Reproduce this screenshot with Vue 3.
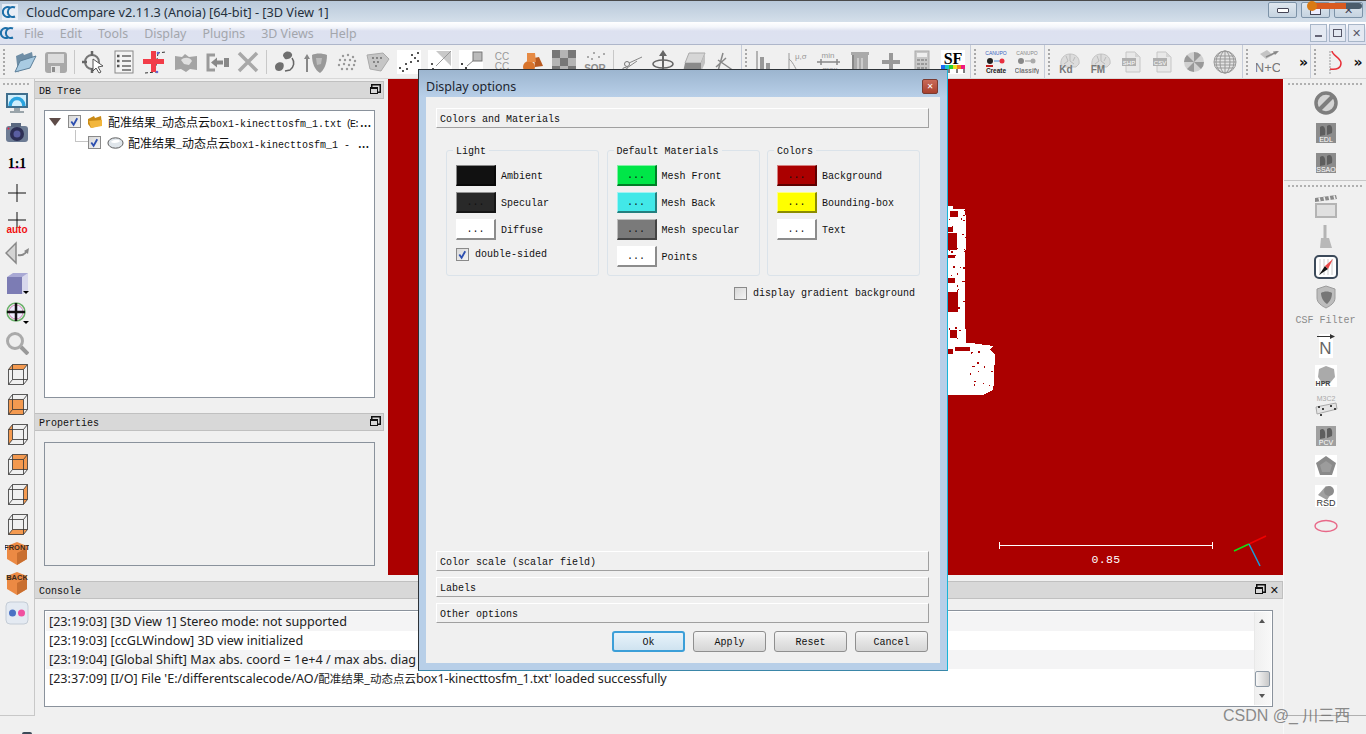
<script setup>
// greyed out toolbar icons, all drawn on a 24x24 box
const cube = (face) =>
  `<path fill="#f49a50" d="${face}"/><path fill="none" stroke="#333" stroke-width=".8" d="M3.500 8.500h15v15h-15zM7.500 3.500h15v15h-15zM3.500 8.500l4-5M18.500 8.500l4-5M18.500 23.500l4-5M3.500 23.500l4-5"/>`
const tagCube = (label) =>
  `<path fill="#ec8a44" d="M12 1l10 4v13l-10 6-10-6V5z"/><path fill="#c96f30" d="M12 12v12l10-6V7z"/><text x="12" y="9" font-family="Liberation Sans" font-weight="700" font-size="7.500" text-anchor="middle" fill="#3a2a20">${label}</text>`
const brain = `<path fill="#dcdcdc" stroke="#c4c4c4" d="M3 15c-1-6 3-11 9-11s10 4 9 10l-3 3H6z"/><path fill="none" stroke="#bbb" d="M8 6l2 5-4 3M12 4v7l4 3M17 7l-2 4"/>`
const greyBox = (label, bg = '#8c8c8c') =>
  `<rect x="2" y="2" width="20" height="20" fill="${bg}"/><path fill="#5e5e5e" d="M6 6c4-3 6 1 5 8l-5 1zM13 5c4-3 6 1 5 7l-5 2z"/><text x="12" y="21" font-family="Liberation Sans" font-size="7" text-anchor="middle" fill="#fff">${label}</text>`
const docIcon = (label) =>
  `<path fill="#e8e8e8" stroke="#c6c6c6" d="M6 2h9l5 5v15H6z"/><path fill="#d4d4d4" d="M15 2v5h5z"/><rect x="2" y="8" width="14" height="8" fill="#b0b0b0"/><text x="9" y="14.500" font-family="Liberation Sans" font-size="6" text-anchor="middle" fill="#fff">${label}</text>`

const icons = {
  folder: `<path fill="#6f8ea6" d="M3 6l7-3 1 2 8-3 1 6-12 5-3 10z"/><path fill="#a9cbe2" stroke="#5c7f99" d="M2 22l5-11 16-5-6 12z"/>`,
  save: `<rect x="1" y="2" width="22" height="21" rx="3" fill="#a9a9a9"/><rect x="4" y="4" width="16" height="9" fill="#dcdcdc"/><rect x="7" y="16" width="9" height="7" fill="#e4e4e4"/><rect x="8" y="17" width="3" height="5" fill="#8c8c8c"/>`,
  pick: `<circle cx="11" cy="12" r="7" fill="none" stroke="#777" stroke-width="2"/><path stroke="#666" stroke-width="2.500" d="M11 1v5M1 12h5M11 18v5"/><path fill="#fff" stroke="#555" d="M12 9l10 7-5 1 3 5-2 1-3-5-3 3z"/>`,
  list: `<rect x="3" y="1" width="18" height="22" fill="#f4f4f4" stroke="#888"/><path stroke="#666" stroke-width="1.500" d="M10 6h9M10 11h9M10 16h9M10 20h9"/><path stroke="#555" stroke-width="2.500" d="M5 6h2.500M5 11h2.500M5 16h2.500"/>`,
  plus: `<path fill="none" stroke="#333" stroke-dasharray="3 2" d="M14 3l9-1M15 3l-3 19M2 23l11-1"/><path fill="#f23c48" d="M8 1h5v8h8v5h-8v8H8v-8H0V9h8z"/><circle cx="15" cy="3" r="1.300" fill="#66c"/><circle cx="14" cy="22" r="1.300" fill="#66c"/>`,
  clouds: `<path fill="#a4a4a4" d="M1 6l7 1 3-3 4 3 8-1v14l-7-1-4 3-5-3-6 1z"/><path fill="#e0e0e0" d="M7 10c3-3 9-3 11 1l-3 4-5-1z"/>`,
  export: `<path fill="none" stroke="#9a9a9a" stroke-width="3" d="M10 5H3v15h7"/><path fill="#888" d="M19 8h5v9h-5zM6 12.500l6-5v3h6v4h-6v3z"/>`,
  close: `<path stroke="#a8a8a8" stroke-width="3.500" d="M3 3l18 18M21 3L3 21"/>`,
  seg: `<path fill="#6f6f6f" d="M10 6c0-5 7-6 9-2 1 3-3 6-7 5zM2 17c0-4 5-6 8-4 2 3 0 8-4 8-2 0-4-1-4-4z"/><path fill="none" stroke="#666" stroke-width="1.500" d="M19 8c3 4 2 9-2 12l-5 1"/>`,
  shield: `<path stroke="#888" stroke-width="2" d="M3 22V7"/><path fill="#888" d="M0 9l3-5 3 5z"/><path fill="#999" d="M8 5c4-2 10-2 15 0 0 9-3 15-7 18-5-3-8-9-8-18z"/><path fill="#bbb" d="M12 8l6 0-1 6-4 1z"/>`,
  dots: `<g fill="#999"><circle cx="8" cy="6" r="1.200"/><circle cx="13" cy="5" r="1.200"/><circle cx="18" cy="7" r="1.200"/><circle cx="5" cy="10" r="1.200"/><circle cx="10" cy="10" r="1.200"/><circle cx="15" cy="10" r="1.200"/><circle cx="20" cy="11" r="1.200"/><circle cx="4" cy="15" r="1.200"/><circle cx="9" cy="14" r="1.200"/><circle cx="14" cy="15" r="1.200"/><circle cx="19" cy="15" r="1.200"/><circle cx="7" cy="19" r="1.200"/><circle cx="12" cy="19" r="1.200"/><circle cx="17" cy="19" r="1.200"/></g>`,
  mesh: `<path fill="#c6c6c6" stroke="#aaa" d="M1 5l16-2 6 6-8 12-11-2z"/><g fill="#666"><circle cx="7" cy="8" r=".9"/><circle cx="11" cy="8" r=".9"/><circle cx="15" cy="8" r=".9"/><circle cx="8" cy="12" r=".9"/><circle cx="12" cy="12" r=".9"/><circle cx="10" cy="16" r=".9"/></g>`,
  scatter: `<rect width="24" height="24" fill="#fff"/><g fill="#555"><rect x="2" y="17" width="2" height="2"/><rect x="5" y="20" width="2" height="2"/><rect x="9" y="18" width="2" height="2"/><rect x="8" y="13" width="2" height="2"/><rect x="13" y="11" width="2" height="2"/><rect x="17" y="7" width="2" height="2"/><rect x="14" y="4" width="2" height="2"/><rect x="20" y="2" width="2" height="2"/><rect x="20" y="10" width="2" height="2"/></g>`,
  scatter2: `<rect width="24" height="24" fill="#fff"/><path fill="#c8c8c8" d="M8 1h15v15z"/><path stroke="#999" d="M10 14l7-7M23 1L8 16"/><g fill="#555"><rect x="3" y="13" width="2" height="2"/><rect x="7" y="20" width="2" height="2"/><rect x="4" y="18" width="2" height="2"/></g>`,
  scatter3: `<rect width="24" height="24" fill="#fff"/><rect x="14" y="2" width="9" height="9" fill="#bbb" stroke="#777"/><path stroke="#888" d="M8 16l7-6"/><g fill="#444"><rect x="2" y="13" width="2" height="2"/><rect x="6" y="17" width="2" height="2"/><rect x="9" y="21" width="2" height="2"/></g>`,
  cc: `<text x="12" y="10" font-family="Liberation Sans" font-size="10" text-anchor="middle" fill="#999">CC</text><text x="12" y="20" font-family="Liberation Sans" font-size="10" text-anchor="middle" fill="#999">CC</text>`,
  orange: `<circle cx="8" cy="17" r="6" fill="#d8742c"/><path fill="#b95a20" d="M13 8l5-1 4 9-8 1z"/><path fill="#e68a44" d="M6 3h8l1 9H6z"/>`,
  checker: `<rect width="24" height="24" fill="#b4b4b4"/><path fill="#777" d="M0 0h8v8H0zM16 0h8v8h-8zM8 8h8v8H8zM0 16h8v8H0zM16 16h8v8h-8z"/>`,
  sor: `<g fill="#aaa"><rect x="4" y="6" width="2" height="2"/><rect x="10" y="2" width="2" height="2"/><rect x="15" y="6" width="2" height="2"/><rect x="20" y="3" width="2" height="2"/><rect x="8" y="8" width="2" height="2"/></g><text x="12" y="22" font-family="Liberation Sans" font-weight="700" font-size="10" text-anchor="middle" fill="#8c8c8c">SOR</text>`,
  scissors: `<circle cx="7" cy="14" r="2.500" fill="none" stroke="#777"/><circle cx="5" cy="20" r="2.500" fill="none" stroke="#777"/><path stroke="#888" d="M9 13l13-6M7 18l10-7"/>`,
  rotate: `<path stroke="#666" stroke-width="2" d="M12 2v21M7 23h10"/><path fill="#666" d="M12 0l4 6H8z"/><ellipse cx="12" cy="14" rx="10" ry="4" fill="none" stroke="#666" stroke-width="1.500"/>`,
  box: `<path fill="#d6d6d6" stroke="#aaa" d="M7 3h16l-4 10H3z"/><path fill="#8a8a8a" d="M3 13h16v9H1z"/><path fill="#c2c2c2" d="M19 13l4-10v10l-4 9z"/>`,
  sfTool: `<path fill="none" stroke="#888" stroke-width="1.500" d="M10 3l-5 18M5 10l16 11M3 17L13 8"/>`,
  hist: `<path fill="none" stroke="#777" d="M2 1v22h20"/><path fill="#999" d="M5 7h4v16H5zM11 13h4v10h-4zM17 19h4v4h-4z"/>`,
  musigma: `<path stroke="#999" fill="none" d="M3 3v20M3 9c3 2 6 8 9 14"/><text x="9" y="9" font-family="Liberation Sans" font-size="8" fill="#999">μ,σ</text>`,
  minmax: `<text x="11" y="8" font-family="Liberation Sans" font-size="8" text-anchor="middle" fill="#999">min</text><path stroke="#888" stroke-width="1.500" d="M0 12h23M4 9v6M20 9v6"/><text x="13" y="22" font-family="Liberation Sans" font-size="8" text-anchor="middle" fill="#999">max</text>`,
  trash: `<path fill="#aaa" d="M3 2h18v3H3zM4 5h16v18H4z"/><path fill="#ccc" d="M9 8h2v12H9zM13 8h2v12h-2z"/><path fill="#888" d="M4 5h2v18H4z"/>`,
  add: `<path stroke="#999" stroke-width="4" d="M12 3v18M3 12h18"/>`,
  calc: `<rect x="5" y="1" width="14" height="22" fill="#c8c8c8" stroke="#aaa"/><rect x="7" y="3" width="10" height="4" fill="#eee"/><g fill="#999"><rect x="7" y="9" width="3" height="2"/><rect x="11" y="9" width="3" height="2"/><rect x="15" y="9" width="2" height="2"/><rect x="7" y="13" width="3" height="2"/><rect x="11" y="13" width="3" height="2"/><rect x="15" y="13" width="2" height="2"/><rect x="7" y="17" width="3" height="2"/><rect x="11" y="17" width="3" height="2"/><rect x="15" y="17" width="2" height="2"/></g>`,
  sf: `<rect width="24" height="24" fill="#fff"/><text x="12" y="14" font-family="Liberation Serif" font-weight="700" font-size="16" text-anchor="middle" fill="#000">SF</text><rect x="0" y="15" width="4" height="4" fill="#1e6cf0"/><rect x="4" y="15" width="4" height="4" fill="#1cc8c8"/><rect x="8" y="15" width="4" height="4" fill="#2cd030"/><rect x="12" y="15" width="4" height="4" fill="#e8e020"/><rect x="16" y="15" width="4" height="4" fill="#f08020"/><rect x="20" y="15" width="4" height="4" fill="#f01880"/><path stroke="#000" d="M1 19v4M8 19v4M16 19v4M23 19v4"/>`,
  canupoC: `<text x="12" y="5" font-family="Liberation Sans" font-size="5" text-anchor="middle" fill="#3a62c0">CANUPO</text><circle cx="6" cy="11" r="3" fill="#222"/><path stroke="#4a8ed0" d="M10 11h6"/><circle cx="18" cy="11" r="2.500" fill="#e83040"/><rect x="2" y="15" width="7" height="2" fill="#c02020"/><text x="12" y="23" font-family="Liberation Sans" font-weight="700" font-size="6.500" text-anchor="middle" fill="#222">Create</text>`,
  canupoK: `<text x="12" y="5" font-family="Liberation Sans" font-size="5" text-anchor="middle" fill="#888">CANUPO</text><circle cx="6" cy="11" r="3" fill="#888"/><path stroke="#999" d="M10 11h6"/><circle cx="18" cy="11" r="2.500" fill="#aaa"/><text x="12" y="23" font-family="Liberation Sans" font-weight="700" font-size="6.500" text-anchor="middle" fill="#777">Classify</text>`,
  kd: `${brain}<text x="8" y="23" font-family="Liberation Sans" font-weight="700" font-size="10" text-anchor="middle" fill="#777">Kd</text>`,
  fm: `${brain}<text x="9" y="23" font-family="Liberation Sans" font-weight="700" font-size="10" text-anchor="middle" fill="#777">FM</text>`,
  shp: docIcon('SHP'),
  csv: docIcon('CSV'),
  disc: `<circle cx="12" cy="12" r="10" fill="#d0d0d0"/><path fill="#999" d="M12 12L12 2a10 10 0 0 1 7 3zM12 12l10 0a10 10 0 0 1-3 7zM12 12l0 10a10 10 0 0 1-7-3zM12 12L2 12a10 10 0 0 1 3-7z"/>`,
  globe: `<circle cx="12" cy="12" r="11" fill="#e4e4e4" stroke="#999"/><g fill="none" stroke="#999"><ellipse cx="12" cy="12" rx="5" ry="11"/><ellipse cx="12" cy="12" rx="9" ry="11"/><path d="M12 1v22M1 12h22M3 6h18M3 18h18M2 9h20M2 15h20"/></g>`,
  nc: `<path fill="#c4c4c4" d="M4 4l7-4 6 5-7 4z"/><path stroke="#888" stroke-width="1.500" d="M10 7l11-5"/><path fill="#888" d="M23 1l-6 .5 2 3.500z"/><text x="12" y="22" font-family="Liberation Sans" font-size="13" text-anchor="middle" fill="#777">N+C</text>`,
  scurve: `<path stroke="#999" stroke-dasharray="2 1" d="M6 1v23"/><path fill="none" stroke="#e83038" stroke-width="1.500" d="M8 1c0 4 9 7 9 12s-4 7-11 6"/>`,
  monitor: `<rect x="1" y="2" width="22" height="15" fill="#3f6f8e"/><rect x="3" y="4" width="18" height="11" fill="#cfeefc"/><path fill="none" stroke="#2aa4e0" stroke-width="3.500" d="M5 15c1-10 13-10 14 0"/><path fill="#9aa4aa" d="M9 17h6v3H9zM5 20h14v2H5z"/>`,
  camera: `<rect x="1" y="5" width="22" height="16" rx="3" fill="#6d7c94"/><rect x="6" y="2" width="10" height="4" fill="#5a6880"/><circle cx="12" cy="13" r="7" fill="#2d2f55"/><circle cx="12" cy="13" r="3.500" fill="#5a5ea0"/><circle cx="3.500" cy="7.500" r="1" fill="#e24"/>`,
  ratio: `<rect x="4" y="16" width="16" height="1.500" fill="#d010c0" opacity=".7"/><text x="12" y="17" font-family="Liberation Serif" font-weight="700" font-size="14" text-anchor="middle" fill="#000">1:1</text>`,
  cross: `<path stroke="#111" d="M12 3v18M3 12h18"/>`,
  auto: `<path stroke="#111" d="M12 1v16M3 9h18"/><text x="12" y="22" font-family="Liberation Sans" font-weight="700" font-size="10" text-anchor="middle" fill="#f01010">auto</text>`,
  viewDir: `<path fill="#d4d4d4" stroke="#888" stroke-width="1.500" d="M11 2v20L1 12z"/><path fill="none" stroke="#888" stroke-width="2" d="M13 14c4 1 7-1 9-4"/><path fill="#888" d="M24 7l-1 6-4-3z"/>`,
  pers: `<path fill="#a8a8d4" d="M2 6l6-4h15v18l-6 3H2z"/><path fill="#7c7cb4" d="M2 6h15v17H2z"/><path fill="#d8d8ec" d="M17 6l6-4v18l-6 3z"/><path d="M18 20h6l-3 3z"/>`,
  move: `<circle cx="11" cy="11" r="9" fill="none" stroke="#6ab06a" stroke-width="1.500"/><circle cx="11" cy="11" r="7" fill="#eef" stroke="#d088b8"/><path stroke="#111" stroke-width="2.500" d="M11 2v18M2 11h18"/><path d="M18 20h6l-3 3z"/>`,
  zoom: `<circle cx="10" cy="10" r="7.500" fill="#eee" stroke="#aaa" stroke-width="3"/><path stroke="#999" stroke-width="4" d="M16 16l7 7"/>`,
  top: cube('M3.500 8.500l4-5h15l-4 5z'),
  front: cube('M3.500 8.500h15v15h-15z'),
  left: cube('M3.500 8.500l4-5v15l-4 5z'),
  back: cube('M7.500 3.500h15v15h-15z'),
  right: cube('M18.500 8.500l4-5v15l-4 5z'),
  bottom: cube('M3.500 23.500l4-5h15l-4 5z'),
  frontTag: tagCube('FRONT'),
  backTag: tagCube('BACK'),
  flicker: `<rect x="1" y="1" width="22" height="22" rx="4" fill="#e4eaf2" stroke="#c4ccd6"/><circle cx="7.500" cy="12" r="3.500" fill="#4a72c4"/><circle cx="16.500" cy="12" r="3.500" fill="#f050a0"/>`,
  no: `<circle cx="12" cy="12" r="10" fill="#d4d4d4" stroke="#7e7e7e" stroke-width="3.500"/><path stroke="#7e7e7e" stroke-width="4" d="M5 19L19 5"/>`,
  edl: greyBox('EDL'),
  ssao: greyBox('SSAO'),
  film: `<path fill="#8a8a8a" d="M1 3l21-3 1 4-22 3z"/><path stroke="#eee" stroke-width="1.500" d="M5 2.500l1 4M10 2l1 4M15 1l1 4M20 .5l1 4"/><rect x="1" y="8" width="22" height="15" fill="#b4b4b4"/><rect x="3" y="10" width="18" height="11" fill="#e0e0e0"/>`,
  brush: `<path stroke="#b4b4b4" stroke-width="3" d="M11 0v13"/><path fill="#b8b8b8" d="M7 13h8l3 10H6z"/>`,
  compass: `<rect x="1" y="1" width="22" height="22" rx="4" fill="#fff" stroke="#3c4a5a" stroke-width="2"/><path stroke="#ccc" d="M6 4v16M10 4v16M14 4v16M18 4v16"/><path fill="#111" d="M5 20l6-9 3 3z"/><path fill="#e84848" d="M19 4l-8 7 3 3z"/>`,
  csf: `<path fill="#bdbdbd" stroke="#9c9c9c" d="M12 1l9 3v9c0 5-5 8-9 10-4-2-9-5-9-10V4z"/><path fill="#777" d="M7 8c3-2 8-2 11 0 0 6-3 9-5 11-3-2-6-6-6-11z"/>`,
  north: `<rect x="5" y="0" width="14" height="24" fill="#fff"/><path stroke="#333" d="M3 2.500h15"/><path fill="#333" d="M21 2.500l-5-2.500v5z"/><text x="11.500" y="20" font-family="Liberation Sans" font-size="17" text-anchor="middle" fill="#666">N</text>`,
  hpr: `<rect x="1" y="1" width="22" height="22" fill="#fff"/><path fill="#aaa" d="M5 5l7-3 8 3 1 8-5 6H8l-4-6z"/><text x="9" y="22" font-family="Liberation Sans" font-weight="700" font-size="7" text-anchor="middle" fill="#444">HPR</text>`,
  m3c2: `<text x="12" y="7" font-family="Liberation Sans" font-size="7" text-anchor="middle" fill="#aaa">M3C2</text><path fill="#e4e4e4" stroke="#aaa" d="M2 13l20-4 1 6-20 5z"/><g fill="#444"><rect x="4" y="12" width="2" height="2"/><rect x="8" y="14" width="2" height="2"/><rect x="16" y="11" width="2" height="2"/><rect x="20" y="14" width="2" height="2"/><rect x="6" y="20" width="2" height="2"/></g>`,
  pcv: greyBox('PCV', '#a0a0a0'),
  penta: `<rect x="1" y="1" width="22" height="22" fill="#fff"/><path fill="#8a8a8a" d="M12 2l10 7-4 12H6L2 9z"/><path fill="#9c9c9c" d="M12 7l6 4-2 7H8l-2-7z"/>`,
  rsd: `<rect x="1" y="1" width="22" height="22" fill="#fff"/><path fill="#a0a0a0" d="M4 11l8-9 7 5-6 9z"/><circle cx="15" cy="7" r="5" fill="#8c8c8c"/><text x="12" y="22" font-family="Liberation Sans" font-size="9" text-anchor="middle" fill="#333">RSD</text>`,
  ellipse: `<ellipse cx="12" cy="12" rx="11" ry="5.500" fill="none" stroke="#e86888" stroke-width="1.300"/>`,
}

const barOne = ['folder', 'save', '|', 'pick', 'list', 'plus', 'clouds', 'export', 'close', '|', 'seg', 'shield', 'dots', 'mesh', 'scatter', 'scatter2', 'scatter3', 'cc', 'orange', 'checker', 'sor', '|', 'scissors', 'rotate', 'box', 'sfTool']
const barTwo = ['hist', 'musigma', 'minmax', 'trash', 'add', 'calc', 'sf']
const barThree = ['canupoC', 'canupoK']
const barFour = ['kd', 'fm', 'shp', 'csv', 'disc', 'globe']

const leftBar = ['monitor', 'camera', 'ratio', 'cross', 'auto', 'viewDir', 'pers', 'move', 'zoom', 'top', 'front', 'left', 'back', 'right', 'bottom', 'frontTag', 'backTag', 'flicker']
const rightTop = ['no', 'edl', 'ssao']
const rightMid = ['film', 'brush', 'compass', 'csf']
const rightLow = ['north', 'hpr', 'm3c2', 'pcv', 'penta', 'rsd', 'ellipse']

const menus = ['File', 'Edit', 'Tools', 'Display', 'Plugins', '3D Views', 'Help']

const groups = [
  { title: 'Light', rows: [['#111111', 'Ambient'], ['#292929', 'Specular'], ['#ffffff', 'Diffuse']] },
  { title: 'Default Materials', rows: [['#00e648', 'Mesh Front'], ['#42e8e8', 'Mesh Back'], ['#7a7a7a', 'Mesh specular'], ['#ffffff', 'Points']] },
  { title: 'Colors', rows: [['#ab0000', 'Background'], ['#ffff00', 'Bounding-box'], ['#ffffff', 'Text']] },
]

const logs = [
  '[23:19:03] [3D View 1] Stereo mode: not supported',
  '[23:19:03] [ccGLWindow] 3D view initialized',
  '[23:19:04] [Global Shift] Max abs. coord = 1e+4 / max abs. diag = 1e+6',
]

// holes in the point cloud, seeded so the picture stays the same
const holes = []
let seed = 7
for (let i = 0; i < 34; i++) {
  seed = (seed * 137 + 41) % 1009
  const x = 26 + (seed % 50)
  seed = (seed * 137 + 41) % 1009
  const y = 60 + (seed % 400)
  holes.push({ x, y })
}
for (let i = 0; i < 14; i++) {
  seed = (seed * 137 + 41) % 1009
  const x = 90 + (seed % 70)
  seed = (seed * 137 + 41) % 1009
  const y = 480 + (seed % 120)
  holes.push({ x, y })
}
</script>

<template>
  <div class="app">
    <header class="titlebar">
      <svg class="cc-logo" viewBox="0 0 16 16"><rect width="16" height="16" fill="#e8eef6" /><path fill="none" stroke="#1b6ea8" stroke-width="2" d="M8 3.500a5 5 0 1 0 0 9M13 3.500a5 5 0 1 0 0 9" /></svg>
      <span class="title-text">CloudCompare v2.11.3 (Anoia) [64-bit] - [3D View 1]</span>
      <div class="win-btns">
        <span class="win-btn"><i class="glyph-min"></i></span>
        <span class="win-btn"><i class="glyph-max"></i></span>
        <span class="win-btn"><i class="glyph-x">✕</i></span>
      </div>
    </header>

    <nav class="menubar">
      <svg class="cc-logo small" viewBox="0 0 16 16"><path fill="none" stroke="#1b6ea8" stroke-width="2" d="M8 3.500a5 5 0 1 0 0 9M13 3.500a5 5 0 1 0 0 9" /></svg>
      <span v-for="m in menus" :key="m" class="menu-item">{{ m }}</span>
      <div class="mdi-btns">
        <span class="mdi-btn"><i class="mdi-min"></i></span>
        <span class="mdi-btn"><i class="mdi-max"></i></span>
        <span class="mdi-btn">✕</span>
      </div>
    </nav>

    <div class="toolbar">
      <div class="tb-group first">
        <i class="grip-v"></i>
        <template v-for="(n, idx) in barOne" :key="idx">
          <i v-if="n === '|'" class="tb-sep"></i>
          <span v-else class="tb-btn"><svg viewBox="0 0 24 24" v-html="icons[n]"></svg></span>
        </template>
      </div>
      <div class="tb-group">
        <i class="grip-v"></i>
        <span v-for="n in barTwo" :key="n" class="tb-btn"><svg viewBox="0 0 24 24" v-html="icons[n]"></svg></span>
      </div>
      <div class="tb-group">
        <i class="grip-v"></i>
        <span v-for="n in barThree" :key="n" class="tb-btn"><svg viewBox="0 0 24 24" v-html="icons[n]"></svg></span>
      </div>
      <div class="tb-group">
        <i class="grip-v"></i>
        <span v-for="n in barFour" :key="n" class="tb-btn"><svg viewBox="0 0 24 24" v-html="icons[n]"></svg></span>
      </div>
      <div class="tb-group">
        <i class="grip-v"></i>
        <span class="tb-btn"><svg viewBox="0 0 24 24" v-html="icons.nc"></svg></span>
        <span class="more wide">»</span>
      </div>
      <div class="tb-group last">
        <i class="grip-v"></i>
        <span class="tb-btn"><svg viewBox="0 0 24 24" v-html="icons.scurve"></svg></span>
        <span class="more">»</span>
      </div>
    </div>

    <div class="workspace">
      <aside class="side-left">
        <i class="grip-h"></i>
        <span v-for="n in leftBar" :key="n" class="side-btn"><svg viewBox="0 0 24 24" v-html="icons[n]"></svg></span>
      </aside>

      <div class="center">
        <div class="upper">
          <div class="dock">
            <div class="dock-head"><span>DB Tree</span><i class="float-ic"></i></div>
            <div class="tree-box">
              <div class="tree-row">
                <i class="arrow"></i>
                <i class="check on"><svg viewBox="0 0 12 12"><path fill="none" stroke="#2d4fb0" stroke-width="2" d="M2.500 6l2.500 3.500 4-7" /></svg></i>
                <svg class="node-ic" viewBox="0 0 16 16"><path fill="#c98a16" d="M1 5l6-3 1 2 6-2 1 9-11 3-3-4z" /><path fill="#f2b63c" d="M2 7l13-1v6l-11 2z" /></svg>
                <span class="node-text"><span class="cjk">配准结果</span>_<span class="cjk">动态点云</span>box1-kinecttosfm_1.txt  <span class="drive">(E:</span><span class="dots">…</span></span>
              </div>
              <div class="tree-row child">
                <i class="branch"></i>
                <i class="check on"><svg viewBox="0 0 12 12"><path fill="none" stroke="#2d4fb0" stroke-width="2" d="M2.500 6l2.500 3.500 4-7" /></svg></i>
                <svg class="node-ic wide" viewBox="0 0 18 14"><ellipse cx="9" cy="7" rx="8" ry="5.500" fill="#dfe5ea" stroke="#555" /><path fill="#fff" d="M4 6c3-3 8-3 10-1-2 2-7 3-10 1z" /></svg>
                <span class="node-text"><span class="cjk">配准结果</span>_<span class="cjk">动态点云</span>box1-kinecttosfm_1 - <span class="dots">…</span></span>
              </div>
            </div>
            <div class="dock-head props"><span>Properties</span><i class="float-ic"></i></div>
            <div class="props-box"></div>
          </div>

          <main class="view">
            <svg class="cloud" viewBox="0 0 240 660" shape-rendering="crispEdges">
              <path fill="#fff" d="M24 48h14l2 10h36l2 62-3 120 1 160 2 60h22l60 8-10 12 15 15-5 105-30 15H24z" />
              <g fill="#ab0000">
                <path d="M30 62h25v18H30zM24 110h14v16H24zM24 130h26v50H24zM24 195h20v10H24zM24 265h20v15H24zM24 305h30v60H24zM30 420h20v25H30zM45 470h45v14H45zM24 478h14v14H24z" />
                <rect v-for="(h, i) in holes" :key="i" :x="h.x" :y="h.y" width="4" height="4" />
              </g>
            </svg>
            <div class="scale-bar"><span class="scale-line"></span><span class="scale-num">0.85</span></div>
            <svg class="axes" viewBox="0 0 40 40"><path stroke="#f00000" stroke-width="1.500" d="M17 10l17-8" /><path stroke="#12e012" stroke-width="1.500" d="M17 10L2 17" /><path stroke="#1a9ad8" stroke-width="1.500" d="M17 10l11 22" /></svg>
          </main>
        </div>

        <section class="console">
          <div class="dock-head con-head"><span>Console</span><i class="float-ic"></i><i class="dock-x">✕</i></div>
          <div class="log-box">
            <div class="log-list">
              <div v-for="(l, i) in logs" :key="i" class="log-row">{{ l }}</div>
              <div class="log-row">[23:37:09] [I/O] File 'E:/differentscalecode/AO/<span class="log-cjk">配准结果</span>_<span class="log-cjk">动态点云</span><span class="log-tail">box1-kinecttosfm_1.txt' loaded successfully</span></div>
            </div>
            <div class="scrollbar">
              <i class="arr up"></i>
              <i class="thumb"></i>
              <i class="arr down"></i>
            </div>
          </div>
        </section>
      </div>

      <aside class="side-right">
        <i class="grip-h"></i>
        <span v-for="n in rightTop" :key="n" class="side-btn"><svg viewBox="0 0 24 24" v-html="icons[n]"></svg></span>
        <i class="side-rule"></i>
        <i class="grip-h second"></i>
        <span v-for="n in rightMid" :key="n" class="side-btn"><svg viewBox="0 0 24 24" v-html="icons[n]"></svg></span>
        <span class="csf-text">CSF Filter</span>
        <span v-for="n in rightLow" :key="n" class="side-btn"><svg viewBox="0 0 24 24" v-html="icons[n]"></svg></span>
      </aside>
    </div>

    <!-- dialog over the main window -->
    <div class="dialog">
      <div class="dlg-title">
        <span>Display options</span>
        <span class="dlg-close">✕</span>
      </div>
      <div class="dlg-body">
        <div class="sec-head">Colors and Materials</div>
        <div class="group-grid">
          <fieldset v-for="g in groups" :key="g.title" class="group">
            <legend>{{ g.title }}</legend>
            <div v-for="r in g.rows" :key="r[1]" class="swatch-row">
              <span class="swatch" :style="{ background: r[0] }">...</span>
              <span class="swatch-label">{{ r[1] }}</span>
            </div>
            <label v-if="g.title === 'Light'" class="check-row">
              <i class="check on"><svg viewBox="0 0 12 12"><path fill="none" stroke="#2d4fb0" stroke-width="2" d="M2.500 6l2.500 3.500 4-7" /></svg></i>
              double-sided
            </label>
          </fieldset>
        </div>
        <label class="grad-row"><i class="check"></i>display gradient background</label>
        <div class="filler"></div>
        <div class="sec-head">Color scale (scalar field)</div>
        <div class="sec-head">Labels</div>
        <div class="sec-head">Other options</div>
        <div class="dlg-actions">
          <button class="btn focus">Ok</button>
          <button class="btn">Apply</button>
          <button class="btn">Reset</button>
          <button class="btn">Cancel</button>
        </div>
      </div>
    </div>

    <!-- things pasted over the capture -->
    <div class="slider"><i class="slider-knob"></i></div>
    <i class="wm-line"></i>
    <span class="watermark">CSDN @_ 川三西</span>
    <i class="corner-mark"></i>
  </div>
</template>

<style>
html, body { margin: 0; padding: 0; overflow: hidden; }
</style>

<style scoped>
.app {
  position: relative;
  width: 1366px;
  height: 734px;
  overflow: hidden;
  display: flex;
  flex-direction: column;
  background: #f0f0f0;
  font-family: "Liberation Mono", "Noto Sans CJK SC", monospace;
  font-size: 10px;
  color: #111;
}
i { font-style: normal; display: block; }

.titlebar {
  height: 21px;
  border-top: 1px solid #4a4a4a;
  display: flex;
  align-items: center;
  background: linear-gradient(#b9c9da, #d4dfea);
  flex: none;
}
.cc-logo { width: 16px; height: 16px; margin-left: 2px; }
.title-text {
  margin-left: 8px;
  font-family: "Noto Sans", sans-serif;
  font-size: 12.700px;
  color: #25303c;
}
.win-btns { margin-left: auto; margin-right: 3px; display: flex; gap: 4px; align-self: flex-start; margin-top: 1px; }
.win-btn {
  width: 27px;
  height: 14px;
  border: 1px solid #7d93a8;
  border-radius: 2px;
  background: linear-gradient(#dfe7ef, #c5d3e0);
  display: flex;
  align-items: center;
  justify-content: center;
}
.glyph-min { width: 10px; height: 3px; border: 1px solid #445; background: #fff; border-radius: 1px; }
.glyph-max { width: 9px; height: 7px; border: 1px solid #445; background: #eef; }
.glyph-x { font-size: 11px; color: #445; font-family: "DejaVu Sans", sans-serif; }

.menubar {
  height: 22px;
  flex: none;
  display: flex;
  align-items: center;
  gap: 16px;
  border-bottom: 1px solid #aeb6ca;
  background: linear-gradient(#ffffff 0, #f4f6fb 5px, #dde1f0 9px, #dde2f0 100%);
  font-family: "Noto Sans", sans-serif;
  font-size: 12.400px;
  color: #a3a6ac;
}
.cc-logo.small { margin: 0 -8px 0 0; }
.mdi-btns { margin-left: auto; display: flex; gap: 2px; margin-right: 1px; }
.mdi-btn {
  width: 15px;
  height: 16px;
  border: 1px solid #a8b6c8;
  background: #e4e9f2;
  display: flex;
  align-items: center;
  justify-content: center;
  font-size: 11px;
  color: #556;
  font-family: "DejaVu Sans", sans-serif;
}
.mdi-min { width: 7px; height: 2px; background: #667; margin-top: 6px; }
.mdi-max { width: 7px; height: 6px; border: 1px solid #556; }

.toolbar {
  height: 33px;
  flex: none;
  display: flex;
  background: #f0f0f0;
  border-bottom: 1px solid #d8d8d8;
}
.tb-group {
  display: flex;
  align-items: center;
  flex: none;
  padding-right: 2px;
  border-right: 1px solid #c6ccd8;
}
.tb-group.first { padding-right: 1px; }
.tb-group.last { border-right: 0; padding-right: 0; }
.grip-v {
  width: 9px;
  height: 26px;
  flex: none;
  background: repeating-linear-gradient(#a8a8a8 0 2px, transparent 2px 4px) 3px 0 / 2px 100% no-repeat;
}
.tb-btn { width: 31px; height: 26px; flex: none; display: flex; align-items: center; justify-content: center; }
.tb-btn svg { width: 24px; height: 24px; display: block; }
.tb-sep { width: 1px; height: 24px; background: #c8c8c8; margin: 0 2px 0 3px; flex: none; }
.more { width: 14px; text-align: center; font: 700 14px "DejaVu Sans", sans-serif; color: #111; }
.more.wide { width: 25px; text-align: right; }

.workspace { flex: 1; display: flex; min-height: 0; }

.side-left {
  width: 34px;
  height: 636px;
  flex: none;
  border-right: 1px solid #c8c8c8;
  border-bottom: 1px solid #c8c8c8;
  display: flex;
  flex-direction: column;
  align-items: center;
}
.grip-h {
  width: 28px;
  height: 9px;
  flex: none;
  background: repeating-linear-gradient(90deg, #b0b0b0 0 2px, transparent 2px 4px) 0 4px / 100% 2px no-repeat;
}
.side-btn { height: 30px; flex: none; display: flex; align-items: center; justify-content: center; }
.side-btn svg { width: 24px; height: 24px; display: block; }

.center { width: 1248px; flex: none; display: flex; flex-direction: column; }
.upper { height: 496px; flex: none; display: flex; }
.dock { width: 349px; flex: none; padding-top: 2px; box-sizing: border-box; }
.dock-head {
  height: 18px;
  box-sizing: border-box;
  display: flex;
  align-items: center;
  padding: 2px 4px 0;
  background: #d8d8d8;
  border: 1px solid #c0c0c0;
  border-left: 0;
}
.float-ic {
  position: relative;
  margin-left: auto;
  margin-right: 1px;
  margin-top: -2px;
  width: 8px;
  height: 7px;
  border: 1.500px solid #111;
  border-top-width: 2px;
  box-sizing: border-box;
  background: #d8d8d8;
  box-shadow: 2px -2px 0 -0.5px #d8d8d8, 2px -2px 0 1px #111;
}
.tree-box {
  margin: 11px 9px 0;
  height: 288px;
  box-sizing: border-box;
  background: #fff;
  border: 1px solid #8a929c;
}
.tree-row { display: flex; align-items: center; height: 21px; padding-left: 4px; white-space: nowrap; }
.tree-row.child { padding-left: 43px; position: relative; }
.arrow {
  width: 0;
  height: 0;
  border-left: 6px solid transparent;
  border-right: 6px solid transparent;
  border-top: 8px solid #5e4c48;
  margin-right: 7px;
}
.branch {
  position: absolute;
  left: 30px;
  top: -2px;
  width: 12px;
  height: 11px;
  border-left: 1px solid #c4c4c4;
  border-bottom: 1px solid #c4c4c4;
}
.check {
  width: 13px;
  height: 13px;
  box-sizing: border-box;
  border: 1px solid #8a8a8a;
  background: linear-gradient(135deg, #d8d8d8, #f4f4f4);
  flex: none;
}
.check svg { display: block; width: 11px; height: 11px; }
.node-ic { width: 16px; height: 16px; margin: 0 5px 0 6px; flex: none; }
.node-ic.wide { width: 17px; height: 14px; margin: 0 4px 0 6px; }
.cjk { font-size: 12px; }
.drive { letter-spacing: -2px; margin-left: -2px; }
.dots { font-family: "Noto Sans CJK SC", sans-serif; font-size: 10px; font-weight: 700; margin-left: 2px; }
.node-text { white-space: pre; }
.dock-head.props { margin-top: 15px; }
.props-box {
  margin: 11px 9px 0;
  height: 124px;
  box-sizing: border-box;
  background: #f0f0f0;
  border: 1px solid #8a929c;
}

.view { position: relative; margin-left: 4px; width: 895px; flex: none; background: #ab0000; overflow: hidden; }
.cloud { position: absolute; left: 552px; top: 111px; width: 80px; height: 220px; }
.scale-bar { position: absolute; left: 611px; top: 463px; width: 214px; text-align: center; color: #fff; }
.scale-line { display: block; height: 7px; box-sizing: border-box; border: 1px solid #fff; border-width: 0 1px; background: linear-gradient(#fff, #fff) 0 3px / 100% 1px no-repeat; }
.scale-num { display: block; margin-top: 4px; font-size: 11.500px; letter-spacing: 0.3px; }
.axes { position: absolute; left: 844px; top: 455px; width: 40px; height: 40px; }

.console { margin-top: 6px; height: 129px; flex: none; }
.con-head .float-ic { margin-right: 7px; }
.dock-x { font: 700 11px "DejaVu Sans", sans-serif; color: #111; margin: -2px -1px 0 0; }
.log-box {
  margin: 11px 10px 0 9px;
  height: 97px;
  box-sizing: border-box;
  display: flex;
  background: #fff;
  border: 1px solid #8a929c;
  padding: 1px;
}
.log-list { flex: 1; min-width: 0; }
.log-row {
  height: 19px;
  line-height: 19px;
  padding-left: 3px;
  font-family: "Noto Sans", "Noto Sans CJK SC", sans-serif;
  font-size: 12.600px;
  color: #222;
  white-space: nowrap;
}
.log-cjk { font-size: 11.500px; }
.log-tail { letter-spacing: -0.1px; }
.log-row:nth-child(odd) { background: #f4f4f5; }
.scrollbar {
  width: 16px;
  flex: none;
  position: relative;
  background: linear-gradient(90deg, #f0f0f0, #f8f8f8);
  border-left: 1px solid #e8e8e8;
}
.arr { position: absolute; left: 4px; width: 0; height: 0; border-left: 3px solid transparent; border-right: 3px solid transparent; }
.arr.up { top: 7px; border-bottom: 4px solid #555; }
.arr.down { bottom: 7px; border-top: 4px solid #555; }
.thumb {
  position: absolute;
  left: 0;
  bottom: 18px;
  width: 15px;
  height: 16px;
  box-sizing: border-box;
  border: 1px solid #8e9aa6;
  border-radius: 2px;
  background: linear-gradient(90deg, #f8f8f8, #c8c8c8);
}

.side-right {
  width: 84px;
  flex: none;
  border-left: 1px solid #f8f8f8;
  box-sizing: border-box;
  display: flex;
  flex-direction: column;
  align-items: center;
}
.side-right .grip-h { width: 76px; }
.side-rule { width: 100%; height: 1px; background: #c8c8c8; margin-top: 2px; flex: none; }
.grip-h.second { margin-bottom: 2px; }
.csf-text { height: 18px; line-height: 18px; font-size: 10px; color: #8a8a8a; flex: none; margin-bottom: 1px; }

/* Display options dialog */
.dialog {
  position: absolute;
  left: 418px;
  top: 69px;
  width: 530px;
  height: 602px;
  box-sizing: border-box;
  display: flex;
  flex-direction: column;
  border: 1px solid #2c3238;
  border-right-color: #18b4d8;
  border-bottom-color: #3a86a8;
  background: #b8cfe8;
}
.dlg-title {
  height: 27px;
  box-sizing: border-box;
  padding: 5px 9px 0 7px;
  flex: none;
  display: flex;
  align-items: center;
  justify-content: space-between;
  background: linear-gradient(#9cb5cf, #b8cfe8);
  font-family: "Noto Sans", sans-serif;
  font-size: 12.500px;
  color: #1c2530;
}
.dlg-close {
  width: 14px;
  height: 13px;
  border: 1px solid #7a3a30;
  border-radius: 2px;
  background: linear-gradient(#c96a58, #a8402e);
  color: #fff;
  font: 700 8px/13px "DejaVu Sans", sans-serif;
  text-align: center;
}
.dlg-body {
  flex: 1;
  margin: 0 7px 7px 7px;
  padding: 11px 11px 11px 10px;
  background: #f0f0f0;
  display: flex;
  flex-direction: column;
  min-height: 0;
}
.sec-head {
  height: 20px;
  flex: none;
  box-sizing: border-box;
  line-height: 19px;
  padding: 1px 0 0 3px;
  border: 1px solid;
  border-color: #fff #a0a0a0 #a0a0a0 #fff;
}
.sec-head + .sec-head { margin-top: 6px; }
.group-grid { display: flex; gap: 7.500px; margin: 14px 0 0 10px; }
.group {
  width: 153px;
  height: 134px;
  box-sizing: border-box;
  margin: 0;
  padding: 7px 9px 0;
  border: 1px solid #dbe3ea;
  border-radius: 3px;
  min-width: 0;
}
.group legend { margin-left: -3px; padding: 4px 3px 0; line-height: 12px; }
.swatch-row { display: flex; align-items: center; gap: 5px; height: 21px; margin-bottom: 6px; }
.swatch-label { padding-top: 2px; }
.swatch {
  width: 40px;
  height: 21px;
  flex: none;
  box-sizing: border-box;
  border: solid;
  border-width: 1px 2px 2px 1px;
  border-color: rgba(255,255,255,.5) rgba(0,0,0,.45) rgba(0,0,0,.45) rgba(255,255,255,.5);
  text-align: center;
  line-height: 20px;
  color: #111;
}
.check-row { display: flex; align-items: center; gap: 6px; margin-top: 8px; }
.grad-row { display: flex; align-items: center; justify-content: flex-end; gap: 6px; margin: 10px 14px 0 0; height: 14px; }
.filler { flex: 1; }
.dlg-actions { display: flex; justify-content: flex-end; gap: 8px; margin: 8px 1px 0 0; }
.btn {
  width: 73px;
  height: 21px;
  box-sizing: border-box;
  padding: 1px 0 0;
  border: 1px solid #8f8f8f;
  border-radius: 3px;
  background: linear-gradient(#f6f6f6, #e4e4e4 50%, #d6d6d6);
  font: 10px "Liberation Mono", monospace;
  color: #111;
}
.btn.focus {
  border: 2px solid #3c9fd8;
  background: linear-gradient(#e8f3fa, #cfe3f0);
}

.slider {
  position: absolute;
  left: 1309px;
  top: 3px;
  width: 53px;
  height: 6px;
  border-radius: 3px;
  background: linear-gradient(90deg, #d85a20 0, #d85a20 70%, #4a5c6c 70%, #4a5c6c);
}
.slider-knob {
  position: absolute;
  left: -2px;
  top: -2px;
  width: 10px;
  height: 10px;
  border-radius: 50%;
  background: #d97a14;
}
.wm-line { position: absolute; left: 1285px; top: 715px; width: 81px; height: 1px; background: #b0b0b0; }
.watermark {
  position: absolute;
  left: 1223px;
  top: 706px;
  font-family: "Liberation Sans", "Noto Sans CJK SC", sans-serif;
  font-size: 16px;
  line-height: 20px;
  color: rgba(110, 110, 110, 0.8);
  white-space: nowrap;
}
.corner-mark { position: absolute; left: 22px; top: 732px; width: 10px; height: 2px; background: #3c4a58; border-radius: 4px 4px 0 0; }
</style>
